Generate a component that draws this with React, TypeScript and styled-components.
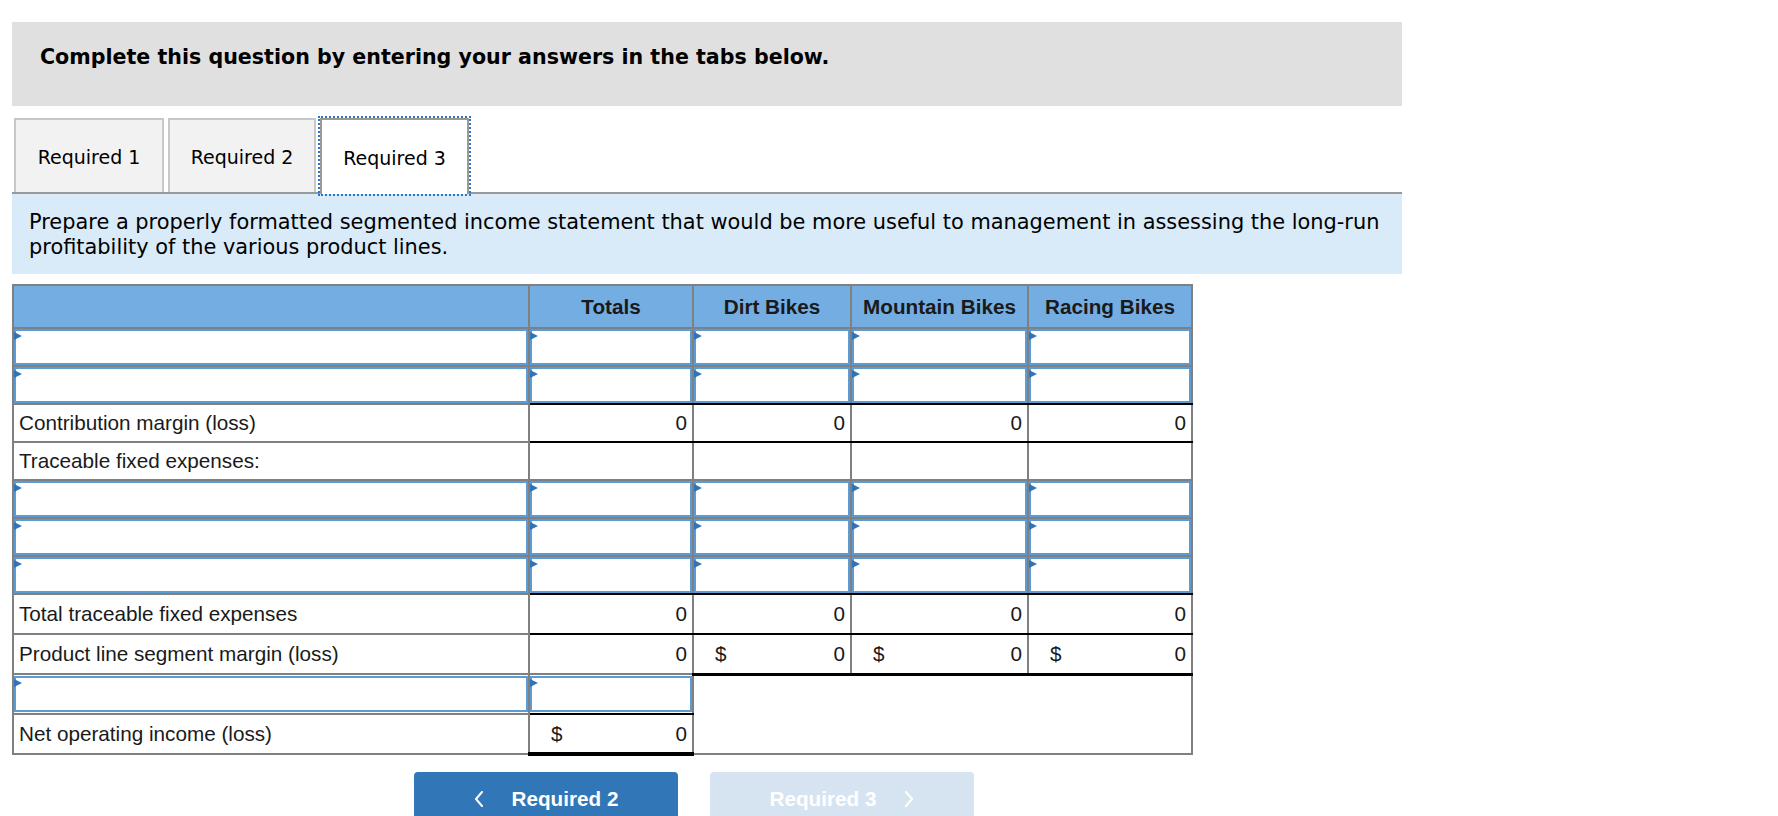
import React from "react";
import styled, { createGlobalStyle, css } from "styled-components";

const GlobalStyle = createGlobalStyle`
  html, body { margin: 0; padding: 0; background: #ffffff; overflow: hidden; }
  body { font-family: "DejaVu Sans", Verdana, sans-serif; }
`;

const Page = styled.div`
  padding: 22px 0 0 12px;
  width: 1390px;
`;

const Banner = styled.div`
  background: #e0e0e0;
  height: 84px;
  box-sizing: border-box;
  padding: 23px 28px 0;
  font-weight: bold;
  font-size: 20.6px;
  line-height: 24px;
  color: #000;
`;

const TabBar = styled.div`
  display: flex;
  align-items: flex-end;
  gap: 4px;
  margin-top: 12px;
  height: 74px;
  padding-left: 2px;
  border-bottom: 2px solid #999999;
`;

const Tab = styled.button<{ $active?: boolean; $w: number }>`
  width: ${(p) => p.$w}px;
  height: 74px;
  box-sizing: border-box;
  padding: 2px 0 0;
  margin: 0;
  font-family: "DejaVu Sans", Verdana, sans-serif;
  font-size: 19px;
  color: #000;
  background: #f2f2f2;
  border: 2px solid #c8c8c8;
  border-bottom: none;
  cursor: pointer;
  ${(p) =>
    p.$active &&
    css`
      height: 76px;
      margin-bottom: -2px;
      background: #ffffff;
      border-color: #999999;
      outline: 2px dotted #2f74c0;
      outline-offset: 0;
    `}
`;

const Instructions = styled.div`
  background: #d9ebf9;
  padding: 16px 17px 15px;
  font-size: 20.9px;
  line-height: 24.5px;
  color: #000;
`;

const Sheet = styled.table`
  margin-top: 10px;
  border-collapse: collapse;
  table-layout: fixed;
  width: 1179px;
  font-family: "Liberation Sans", Arial, sans-serif;
  font-size: 20.7px;
  color: #1a1a1a;
`;

const Row = styled.tr<{ $h?: number }>`
  height: ${(p) => p.$h ?? 38}px;
`;

const baseCell = css`
  border: 2px solid #808080;
  height: 38px;
  box-sizing: border-box;
  vertical-align: middle;
`;

const HeadCell = styled.th`
  ${baseCell};
  height: 43px;
  background: #74ade2;
  font-weight: bold;
  text-align: center;
  padding: 0;
  white-space: nowrap;
`;

type Line = "thin" | "thick" | "heavy" | undefined;

const lineBelow = (l: Line) =>
  l === "thin"
    ? css`border-bottom: 2px solid #000;`
    : l === "thick"
    ? css`border-bottom: 3px solid #000;`
    : l === "heavy"
    ? css`border-bottom: 4px solid #000;`
    : css``;

const LabelCell = styled.td`
  ${baseCell};
  padding: 0 0 0 5px;
  white-space: nowrap;
`;

const ValueCell = styled.td<{ $below?: Line }>`
  ${baseCell};
  padding: 0 5px 0 21px;
  ${(p) => lineBelow(p.$below)};
`;

const Amount = styled.div`
  display: flex;
  justify-content: space-between;
  align-items: center;
`;

const InputCell = styled.td<{ $below?: Line }>`
  ${baseCell};
  padding: 0;
  ${(p) => lineBelow(p.$below)};
`;

const InputBox = styled.div`
  position: relative;
  height: 36px;
  box-sizing: border-box;
  border: 2px solid #5d9bd6;
  background: #fff;
  &::before {
    content: "";
    position: absolute;
    left: -2px;
    top: 1px;
    border-top: 4px solid transparent;
    border-bottom: 4px solid transparent;
    border-left: 8px solid #2f73b9;
  }
`;

const BlankCell = styled.td`
  ${baseCell};
  padding: 0;
`;

const NavRow = styled.div`
  display: flex;
  gap: 32px;
  margin-top: 16px;
  padding-left: 402px;
`;

const NavButton = styled.button<{ $disabled?: boolean }>`
  width: 264px;
  height: 54px;
  border: none;
  border-radius: 4px;
  display: flex;
  align-items: center;
  justify-content: center;
  gap: 28px;
  padding: 0;
  font-family: "Liberation Sans", Arial, sans-serif;
  font-weight: bold;
  font-size: 20.7px;
  color: #ffffff;
  background: ${(p) => (p.$disabled ? "#d6e4f2" : "#3176b7")};
  cursor: ${(p) => (p.$disabled ? "default" : "pointer")};
`;

const Chevron = ({ dir }: { dir: "left" | "right" }) => (
  <svg width="10" height="16" viewBox="0 0 10 16" fill="none">
    <polyline
      points={dir === "left" ? "8,1 2,8 8,15" : "2,1 8,8 2,15"}
      stroke="#ffffff"
      strokeWidth="2"
      strokeLinecap="round"
      strokeLinejoin="round"
    />
  </svg>
);

const Input = ({ below }: { below?: Line }) => (
  <InputCell $below={below}>
    <InputBox />
  </InputCell>
);

const Value = ({ v, dollar, below }: { v: string; dollar?: boolean; below?: Line }) => (
  <ValueCell $below={below}>
    <Amount>
      <span>{dollar ? "$" : ""}</span>
      <span>{v}</span>
    </Amount>
  </ValueCell>
);

const InputRow = ({ below }: { below?: Line }) => (
  <Row>
    <Input />
    <Input below={below} />
    <Input below={below} />
    <Input below={below} />
    <Input below={below} />
  </Row>
);

export default function App() {
  return (
    <>
      <GlobalStyle />
      <Page>
        <Banner>Complete this question by entering your answers in the tabs below.</Banner>
        <TabBar>
          <Tab $w={150}>Required 1</Tab>
          <Tab $w={148}>Required 2</Tab>
          <Tab $w={149} $active>
            Required 3
          </Tab>
        </TabBar>
        <Instructions>
          Prepare a properly formatted segmented income statement that would be more useful to management in assessing the long-run
          <br />
          profitability of the various product lines.
        </Instructions>
        <Sheet>
          <colgroup>
            <col style={{ width: 516 }} />
            <col style={{ width: 164 }} />
            <col style={{ width: 158 }} />
            <col style={{ width: 177 }} />
            <col style={{ width: 164 }} />
          </colgroup>
          <thead>
            <Row $h={43}>
              <HeadCell />
              <HeadCell>Totals</HeadCell>
              <HeadCell>Dirt Bikes</HeadCell>
              <HeadCell>Mountain Bikes</HeadCell>
              <HeadCell>Racing Bikes</HeadCell>
            </Row>
          </thead>
          <tbody>
            <InputRow />
            <InputRow below="thin" />
            <Row>
              <LabelCell>Contribution margin (loss)</LabelCell>
              <Value v="0" below="thin" />
              <Value v="0" below="thin" />
              <Value v="0" below="thin" />
              <Value v="0" below="thin" />
            </Row>
            <Row>
              <LabelCell>Traceable fixed expenses:</LabelCell>
              <BlankCell />
              <BlankCell />
              <BlankCell />
              <BlankCell />
            </Row>
            <InputRow />
            <InputRow />
            <InputRow below="thin" />
            <Row $h={40}>
              <LabelCell>Total traceable fixed expenses</LabelCell>
              <Value v="0" below="thin" />
              <Value v="0" below="thin" />
              <Value v="0" below="thin" />
              <Value v="0" below="thin" />
            </Row>
            <Row $h={40}>
              <LabelCell>Product line segment margin (loss)</LabelCell>
              <Value v="0" />
              <Value v="0" dollar below="thick" />
              <Value v="0" dollar below="thick" />
              <Value v="0" dollar below="thick" />
            </Row>
            <Row $h={40}>
              <Input />
              <Input below="thin" />
              <BlankCell colSpan={3} rowSpan={2} />
            </Row>
            <Row $h={40}>
              <LabelCell>Net operating income (loss)</LabelCell>
              <Value v="0" dollar below="heavy" />
            </Row>
          </tbody>
        </Sheet>
        <NavRow>
          <NavButton>
            <Chevron dir="left" />
            <span>Required 2</span>
          </NavButton>
          <NavButton $disabled>
            <span>Required 3</span>
            <Chevron dir="right" />
          </NavButton>
        </NavRow>
      </Page>
    </>
  );
}
